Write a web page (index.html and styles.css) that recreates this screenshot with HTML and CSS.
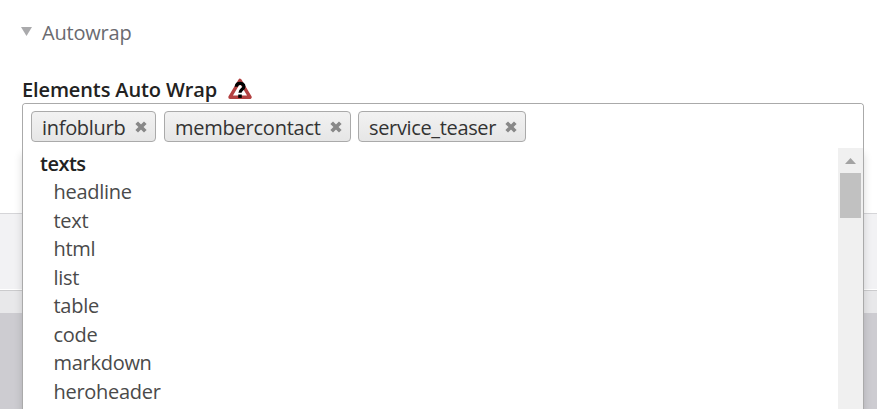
FILE: index.html
```html
<!DOCTYPE html>
<html lang="en">
<head>
<meta charset="utf-8">
<title>Autowrap</title>
<link rel="stylesheet" href="styles.css">
</head>
<body>
<main class="panel">
  <div class="legend"><svg class="arrow" width="11" height="9" viewBox="0 0 11 9"><path d="M0 0H11L5.5 9Z"/></svg><span>Autowrap</span></div>
  <div class="label"><span>Elements Auto Wrap</span><svg class="warn" width="24" height="21" viewBox="0 0 24 21"><path class="tri" d="M12 2.4L22 19.2H2Z"/><path class="mark" d="M8.3 8.8C8.3 4.3 15.9 4.3 15.9 8.4C15.9 11.2 12 11.2 12 14.8"/><path class="dot" d="M10.2 16.5h3.6v3.4h-3.6z"/></svg></div>
  <div class="select">
    <ul class="choices">
      <li class="chip"><span>infoblurb</span><svg class="close" width="12" height="12" viewBox="0 0 12 12"><path d="M1.7 1.7L10.3 10.3M10.3 1.7L1.7 10.3"/></svg></li>
      <li class="chip"><span>membercontact</span><svg class="close" width="12" height="12" viewBox="0 0 12 12"><path d="M1.7 1.7L10.3 10.3M10.3 1.7L1.7 10.3"/></svg></li>
      <li class="chip"><span>service_teaser</span><svg class="close" width="12" height="12" viewBox="0 0 12 12"><path d="M1.7 1.7L10.3 10.3M10.3 1.7L1.7 10.3"/></svg></li>
    </ul>
    <div class="drop">
      <ul class="results">
        <li class="group">texts</li>
        <li>headline</li><li>text</li><li>html</li><li>list</li><li>table</li><li>code</li><li>markdown</li><li>heroheader</li>
      </ul>
      <div class="scrollbar"><svg width="11" height="6" viewBox="0 0 11 6"><path d="M5.5 0L11 6H0Z"/></svg><div class="thumb"></div></div>
    </div>
  </div>
</main>
<div class="strip"></div>
<footer class="footer"></footer>
</body>
</html>
```

FILE: styles.css
```css
* { box-sizing: border-box; }
html, body { height: 100%; overflow: hidden; }
body { margin: 0; background: #cdccd1; font: 20px/28.5px "Open Sans", sans-serif; color: #333; }
ul { list-style: none; margin: 0; padding: 0; }
.panel { height: 213px; padding: 19px 13px 0 22px; background: #fff; }
.legend { display: flex; align-items: center; height: 28px; color: #6a6a70; letter-spacing: -.2px; }
.arrow { margin: -3px 10px 0 -1px; fill: #aaaaac; }
.label { display: flex; height: 28px; margin-top: 28px; line-height: 30px; font-weight: 600; color: #222; letter-spacing: -.12px; }
.warn { margin: 3px 0 0 11px; fill: none; }
.tri { stroke: #b34040; stroke-width: 3.4; stroke-linejoin: round; fill: #fff; }
.mark { stroke: #000; stroke-width: 3.2; }
.dot { fill: #000; }
.select { position: relative; height: 306px; border: 1px solid #aaa; border-bottom: 0; border-radius: 4px 4px 0 0; }
.choices { display: flex; height: 44px; padding: 7px 8px; gap: 8px; background: #fff; border-radius: 3px 3px 0 0; }
.chip { display: flex; justify-content: space-between; height: 31px; padding: 0 8px 0 10px; border: 1px solid #aaa; border-radius: 4px; background: linear-gradient(#f2f2f2, #e6e6e6); line-height: 32px; }
.chip:nth-child(1) { width: 125px; letter-spacing: -.3px; }
.chip:nth-child(2) { width: 187px; letter-spacing: -.23px; }
.chip:nth-child(3) { width: 168px; margin-left: -1px; letter-spacing: -.35px; }
.close { margin-top: 9px; flex: none; stroke: #888; stroke-width: 3.7; }
.drop { position: absolute; top: 44px; left: -1px; right: -1px; bottom: 0; display: flex; justify-content: space-between; border: solid #aaa; border-width: 0 1px; background: #fff; box-shadow: 0 6px 8px rgba(0, 0, 0, .15); clip-path: inset(0 -20px); }
.results { height: 261px; overflow: hidden; color: #4a4a4a; padding-top: 1.6px; }
.results li { padding-left: 30.5px; letter-spacing: -.28px; }
.results .group { padding-left: 17px; font-weight: 600; color: #222; letter-spacing: -.5px; }
.scrollbar { width: 25px; background: #f0f0f0; display: flex; flex-direction: column; align-items: center; padding-top: 10px; fill: #a3a3a3; }
.thumb { width: 21px; height: 45px; margin-top: 9px; background: #c1c1c1; }
.strip { height: 77px; border-top: 1px solid #d5d5d8; border-bottom: 1px solid #fff; background: #f2f2f4; }
.footer { height: 23px; border-top: 1px solid #cbcbcd; background: #e8e8ea; }
```
